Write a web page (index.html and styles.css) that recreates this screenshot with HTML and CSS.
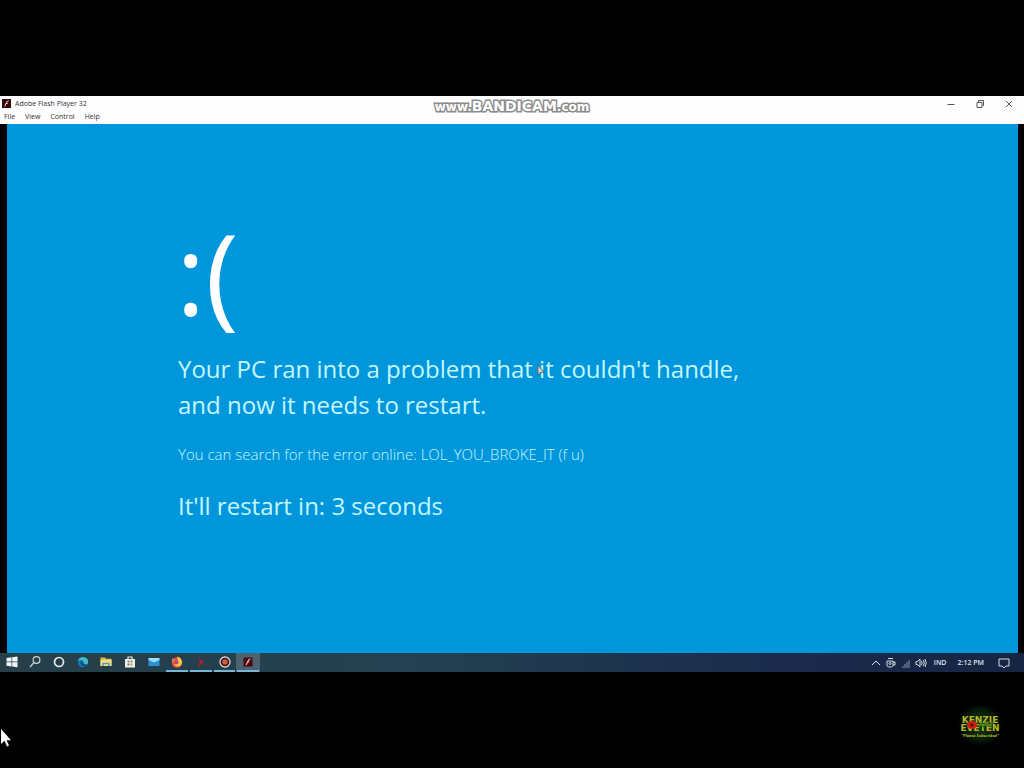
FILE: index.html
```
<!DOCTYPE html>
<html lang="en">
<head>
<meta charset="utf-8">
<title>Adobe Flash Player 32</title>
<link rel="stylesheet" href="styles.css">
</head>
<body>
<div class="desktop">
  <header class="window-head">
    <div class="titlebar">
      <svg class="app-icon" viewBox="0 0 10 10"><rect width="10" height="10" fill="#35090c"/><path d="M7.500 2C5 2 5 4.500 3 8M4.200 5h2.200" stroke="#f4c9c4" stroke-width="1.200" fill="none"/></svg>
      <h1 class="title">Adobe Flash Player 32</h1>
      <div class="window-buttons">
        <button aria-label="Minimize"><svg viewBox="0 0 10 10"><path d="M1.500 5.500h7"/></svg></button>
        <button aria-label="Restore"><svg viewBox="0 0 10 10"><path d="M2 3.500h5v5H2zM3.500 3V1.500h5v5H7.500"/></svg></button>
        <button aria-label="Close"><svg viewBox="0 0 10 10"><path d="M2 2l6 6M8 2L2 8"/></svg></button>
      </div>
    </div>
    <nav class="menu"><button>File</button><button>View</button><button>Control</button><button>Help</button></nav>
    <div class="watermark"><span>www.</span><span class="brand">BANDICAM</span><span class="domain">.com</span></div>
  </header>

  <main class="stage">
    <p class="face">:(</p>
    <p class="message">Your PC ran into a problem that it couldn't handle,<br>and now it needs to restart.</p>
    <p class="hint">You can search for the error online: LOL_YOU_BROKE_IT (f u)</p>
    <p class="message">It'll restart in: 3 seconds</p>
    <svg class="pointer" viewBox="0 0 10 14"><path d="M1 1v11l3-3h4z" fill="#d9d3bd" stroke="#45606c" stroke-width="1"/></svg>
  </main>

  <footer class="taskbar">
    <div class="apps">
      <button aria-label="Start"><svg viewBox="0 0 14 14"><path d="M1.500 3L6.500 2.300v4.200h-5zM7.200 2.200L12.500 1.500v5H7.200zM1.500 7.200h5v4.300l-5-.7zM7.200 7.200h5.300v5L7.200 11.500z" fill="#f3fbff"/></svg></button>
      <button aria-label="Search"><svg viewBox="0 0 14 14"><circle cx="8.500" cy="5" r="3.400" fill="none" stroke="#c9d3d6" stroke-width="1.200"/><path d="M6 7.500L2 12" stroke="#c9d3d6" stroke-width="1.300"/></svg></button>
      <button aria-label="Cortana"><svg viewBox="0 0 14 14"><circle cx="7" cy="7" r="4.500" fill="none" stroke="#e3eaec" stroke-width="1.700"/></svg></button>
      <button aria-label="Edge"><svg viewBox="0 0 14 14"><circle cx="7" cy="7" r="5.200" fill="#1676b8"/><path d="M2 6a5.200 5.200 0 0 1 10.200 1.500c-.4 2-4.200 2-4.200.4 0-3-4-4-6-1.900z" fill="#43bfc4"/><path d="M6 6.500c-1.500 2 1 4.800 4.500 4" stroke="#0d3b65" stroke-width="1.600" fill="none"/></svg></button>
      <button aria-label="File Explorer"><svg viewBox="0 0 14 14"><path d="M1.500 2.500H6l1 1.200h5.500V11h-11z" fill="#e6bd4a"/><path d="M1.500 5h11v6h-11z" fill="#f6df86"/><path d="M4 11V8.500h6V11" fill="none" stroke="#4d9bc2" stroke-width="1.500"/></svg></button>
      <button aria-label="Microsoft Store"><svg viewBox="0 0 14 14"><path d="M5 4V2h4v2" fill="none" stroke="#e8eeee" stroke-width="1.200"/><path d="M2 4h10v8.500H2z" fill="#f2f2ed"/><path d="M4.500 5.500h2v2h-2z" fill="#d3663f"/><path d="M7.500 5.500h2v2h-2z" fill="#6d9e44"/><path d="M4.500 8.500h2v2h-2z" fill="#3d87b0"/><path d="M7.500 8.500h2v2h-2z" fill="#c9a135"/></svg></button>
      <button aria-label="Mail"><svg viewBox="0 0 14 14"><path d="M1.500 3h11v8h-11z" fill="#2b91d2"/><path d="M1.500 3h11v2L7 7.500 1.500 5z" fill="#9bdcf8"/></svg></button>
      <button class="open" aria-label="Firefox"><svg viewBox="0 0 14 14"><circle cx="7" cy="7.500" r="5.200" fill="#ef5239"/><path d="M7 1.500c4 1 5.500 4 4.800 7C11 12 5 12.500 4 9c3 1 5.500-1 3-7.500z" fill="#ffc64a"/><circle cx="6.500" cy="7.500" r="2" fill="#a55086"/><path d="M2 3l2 1.500L3 8" fill="#ff944a"/></svg></button>
      <button class="open" aria-label="Media player"><svg viewBox="0 0 14 14"><path d="M4 2.500l6.500 4.500L4 12l2-5z" fill="#a32336"/></svg></button>
      <button class="open" aria-label="Bandicam"><svg viewBox="0 0 14 14"><circle cx="7" cy="7" r="5" fill="#2b1718" stroke="#dad5d3" stroke-width="1.300"/><circle cx="7" cy="7" r="2.800" fill="#d7563f"/></svg></button>
      <button class="open active" aria-label="Adobe Flash Player"><svg viewBox="0 0 14 14"><path d="M2.500 2.500h9v9h-9z" fill="#4b0710"/><path d="M9.500 4C7 4 7 7 5 10M6 7h2.200" stroke="#f2c8c5" stroke-width="1.100" fill="none"/></svg></button>
    </div>
    <div class="tray">
      <button aria-label="Show hidden icons"><svg viewBox="0 0 12 12"><path d="M2 8l4-4 4 4"/></svg></button>
      <button aria-label="Devices"><svg viewBox="0 0 12 12"><path d="M2 4h6v4.500c0 2-6 2-6 0zM8 5h2v3H8M3 1.500h5"/><circle cx="5" cy="6.500" r="1"/></svg></button>
      <button aria-label="Network"><svg viewBox="0 0 12 12"><path d="M3 11V9M5 11V7M7 11V5M9 11V3" opacity=".6"/></svg></button>
      <button aria-label="Volume"><svg viewBox="0 0 12 12"><path d="M1 4.500h1.500L5 2v8L2.500 7.500H1zM6.500 4q1.300 2 0 4M8.300 3q2 3 0 6M10 2q2.500 4 0 8"/></svg></button>
      <button class="lang">IND</button>
      <time class="clock">2:12 PM</time>
      <button class="notes" aria-label="Notifications"><svg viewBox="0 0 12 12"><path d="M1 2h10v7H8l-2 2-2-2H1z"/></svg></button>
    </div>
  </footer>
</div>

<svg class="cursor" viewBox="0 0 12 20"><path d="M1 1v15l3.500-3.200L7 18.500l2-1-2.400-5.200H11z" fill="#fff"/></svg>
<div class="channel">
  <strong>KENZIE</strong>
  <strong>EVETEN</strong>
  <small>"Please Subscribed"</small>
  <svg class="mark" viewBox="0 0 32 10"><ellipse cx="7" cy="5" rx="5" ry="4" fill="#d01c12"/><path d="M5.500 3l4 2-4 2z" fill="#501009"/><path d="M14 7l2-4 2 4 2-4 2 4V3l4 4V3h3" stroke="#407d1b" stroke-width="1.500" fill="none"/></svg>
</div>
</body>
</html>
```
FILE: styles.css
```
* { box-sizing: border-box; }
body {
  margin: 0;
  min-height: 100vh;
  display: flex;
  flex-direction: column;
  justify-content: center;
  background: #000;
  font-family: "Open Sans", "Noto Sans", sans-serif;
}
p, h1 { margin: 0; font-weight: 400; }
button {
  border: 0;
  padding: 0;
  background: none;
  color: inherit;
  font: inherit;
  display: flex;
  align-items: center;
  justify-content: center;
}
svg { display: block; }

.desktop {
  width: 100%;
  aspect-ratio: 16 / 9;
  display: flex;
  flex-direction: column;
}

.window-head {
  position: relative;
  height: 28px;
  padding-top: 1px;
  background: #fefefe;
  color: #333;
  font-size: 7px;
  line-height: 13px;
}
.titlebar { display: flex; align-items: center; height: 13px; padding-left: 2px; gap: 4px; }
.app-icon { width: 9px; height: 9px; }
.title { font-size: 7px; line-height: 13px; }
.window-buttons { display: flex; margin-left: auto; padding-right: 10px; gap: 19px; }
.window-buttons svg { width: 10px; height: 10px; fill: none; stroke: #555; stroke-width: 1; }
.menu { display: flex; gap: 10px; height: 13px; padding-left: 4px; }
.watermark {
  position: absolute;
  top: 2px;
  left: 0;
  right: 0;
  display: flex;
  justify-content: center;
  align-items: baseline;
  font: bold 12px/16px "DejaVu Sans", sans-serif;
  color: #fff;
  -webkit-text-stroke: 3px #8c8c8c;
  paint-order: stroke fill;
}
.brand { font-size: 14px; }

.stage {
  position: relative;
  flex: 1;
  margin: 0 6px 0 7px;
  padding: 90px 0 0 171px;
  background: #0096db;
  color: #c5f7ff;
}
.face {
  margin-left: -2px;
  font-size: 112px;
  line-height: 116px;
  color: #fff;
}
.message { font-size: 24px; line-height: 36px; font-weight: 375; }
.face + .message { margin-top: 21px; }
.hint { margin: 20px 0 23px; font-size: 15px; line-height: 22px; font-weight: 350; }
.pointer { position: absolute; left: 530px; top: 240px; width: 9px; height: 13px; }

.taskbar {
  height: 19px;
  display: flex;
  justify-content: space-between;
  background: linear-gradient(90deg, #263f49, #234151 40%, #1b2b4c 75%, #172543);
  color: #dce4ec;
}
.apps { display: flex; width: 260px; }
.apps button { flex: 1; border-bottom: 2px solid transparent; }
.apps svg { width: 14px; height: 14px; }
.apps .open { border-image: linear-gradient(90deg, transparent 12%, #79b5d4 12%, #79b5d4 88%, transparent 88%) 2; border-width: 0 0 2px; }
.apps .active { background: #4d6470; }
.tray {
  display: flex;
  align-items: center;
  gap: 3px;
  padding-right: 14px;
  font-size: 7px;
  font-weight: 600;
}
.tray svg { width: 12px; height: 12px; fill: none; stroke: #d5dce5; stroke-width: 1; }
.lang { padding-left: 4px; }
.clock { margin: 0 11px 0 8px; }

.cursor { position: absolute; left: 0; bottom: 20px; width: 12px; height: 20px; }
.channel {
  position: absolute;
  right: 23px;
  bottom: 23px;
  width: 42px;
  height: 40px;
  display: flex;
  flex-direction: column;
  align-items: center;
  padding-top: 11px;
  background: radial-gradient(#14400f, #071a07 55%, #000 75%);
  color: #b9b42c;
}
.channel strong { font: bold 9px/8px "DejaVu Sans", sans-serif; }
.channel small { margin-top: 1px; font: italic bold 4px/6px "Open Sans", sans-serif; white-space: nowrap; }
.mark { position: absolute; left: 6px; top: 15px; width: 32px; height: 10px; }
```
